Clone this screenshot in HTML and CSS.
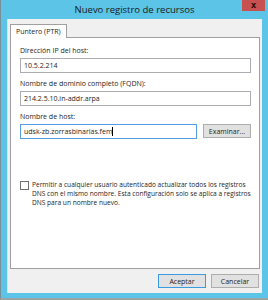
FILE: index.html
```html
<!DOCTYPE html>
<html lang="es">
<head>
    <meta charset="UTF-8">
    <title>Nuevo registro de recursos</title>
    <link rel="stylesheet" href="styles.css">
</head>
<body>
    <div class="window">
        <div class="titlebar">
            <span></span>
            <span class="title">Nuevo registro de recursos</span>
            <button class="close">x</button>
        </div>

        <div class="client">
            <div class="tabs">
                <div class="tab">Puntero (PTR)</div>
            </div>

            <div class="panel">
                <label class="label">Dirección IP del host:</label>
                <div class="field">10.5.2.214</div>

                <label class="label">Nombre de dominio completo (FQDN):</label>
                <div class="field">214.2.5.10.in-addr.arpa</div>

                <label class="label">Nombre de host:</label>
                <div class="row">
                    <div class="field focus">udsk-zb.zorrasbinarias.fem<span class="caret"></span></div>
                    <button class="btn">Examinar...</button>
                </div>

                <div class="check">
                    <span class="box"></span>
                    <p>Permitir a cualquier usuario autenticado actualizar todos los registros DNS con el mismo nombre. Esta configuración solo se aplica a registros DNS para un nombre nuevo.</p>
                </div>
            </div>

            <div class="actions">
                <button class="btn default">Aceptar</button>
                <button class="btn">Cancelar</button>
            </div>
        </div>
    </div>
</body>
</html>
```

FILE: styles.css
```css
body {
    margin: 0;
    font-family: "Open Sans", "Noto Sans", sans-serif;
    font-size: 7px;
    color: #1e1e1e;
}
.window {
    width: 268px;
    height: 300px;
    box-sizing: border-box;
    background-color: #5bc4e7;
    border-left: 1px solid #7a8e98;
    border-bottom: 2px solid #9aa4aa;
    display: flex;
    flex-direction: column;
}
.titlebar {
    height: 19px;
    display: grid;
    grid-template-columns: 1fr auto 1fr;
    align-items: start;
}
.title {
    font-size: 9.5px;
    line-height: 19px;
    color: #1a1a1a;
}
.close {
    justify-self: end;
    width: 23px;
    height: 11px;
    margin-right: 3px;
    padding: 0;
    border: none;
    background-color: #c75050;
    color: #2a0a0a;
    font-family: "DejaVu Sans", sans-serif;
    font-weight: bold;
    font-size: 8px;
    line-height: 10px;
}
.client {
    flex: 1;
    margin: 0 6px 5px 6px;
    background-color: #f0f0f0;
    border-left: 1px solid #d6e4ea;
    padding: 5px 2px 0 2px;
    display: flex;
    flex-direction: column;
}
.tabs {
    display: flex;
}
.tab {
    background: white;
    border: 1px solid #a0a0a0;
    border-bottom: none;
    padding: 0 5px;
    height: 13px;
    line-height: 13px;
    margin-bottom: -1px;
    position: relative;
}
.panel {
    background: white;
    border: 1px solid #a0a0a0;
    height: 232px;
    box-sizing: border-box;
    padding: 8px 8px 0 9px;
    display: flex;
    flex-direction: column;
}
.label {
    line-height: 10px;
    margin-bottom: 2px;
}
.field {
    height: 15px;
    box-sizing: border-box;
    border: 1px solid #abadb3;
    padding: 0 3px;
    line-height: 13px;
    margin-bottom: 6px;
}
.row {
    display: flex;
    gap: 6px;
}
.row .field {
    flex: 1;
}
.focus {
    border-color: #569de5;
}
.caret {
    display: inline-block;
    width: 1px;
    height: 9px;
    background: #000;
    vertical-align: -2px;
}
.btn {
    font-family: inherit;
    font-size: 7px;
    color: #1e1e1e;
    width: 48px;
    height: 14px;
    padding: 0;
    background-color: #e1e1e1;
    border: 1px solid #adadad;
}
.default {
    border-color: #3c9ae0;
}
.check {
    display: flex;
    gap: 3px;
    margin-top: 35px;
    margin-right: -2px;
}
.box {
    flex: none;
    width: 7px;
    height: 7px;
    border: 1px solid #707070;
    background: white;
    margin-top: 1px;
}
.check p {
    margin: 0;
    font-size: 6.6px;
    line-height: 9px;
}
.actions {
    display: flex;
    justify-content: flex-end;
    gap: 5px;
    margin-top: 5px;
    padding-right: 1px;
}
```
